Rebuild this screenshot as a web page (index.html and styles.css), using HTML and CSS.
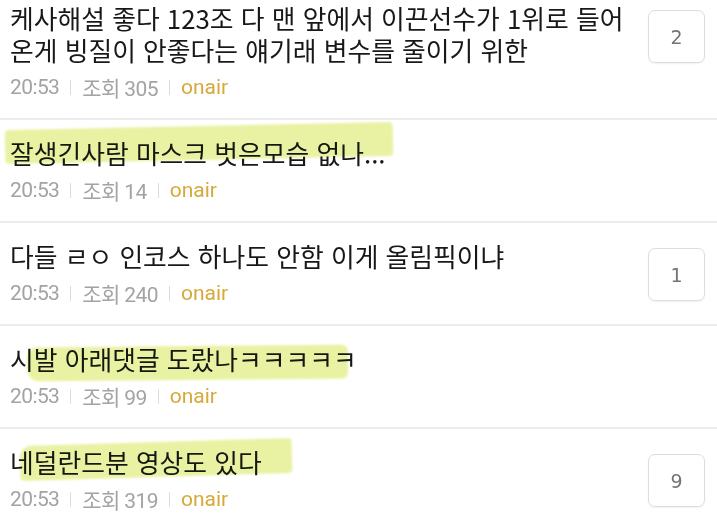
FILE: index.html
```html
<!DOCTYPE html>
<html lang="ko">
<head>
<meta charset="utf-8">
<link rel="stylesheet" href="styles.css">
</head>
<body>
<ul class="list">
  <li class="row">
    <div class="main">
      <div class="title">케사해설 좋다 123조 다 맨 앞에서 이끈선수가 1위로 들어 온게 빙질이 안좋다는 얘기래 변수를 줄이기 위한</div>
      <div class="meta"><span>20:53</span><i class="sep"></i><span>조회 305</span><i class="sep"></i><span class="nick">onair</span></div>
    </div>
    <div class="count">2</div>
  </li>
  <li class="row">
    <span class="mark mark-a"></span>
    <div class="main">
      <div class="title">잘생긴사람 마스크 벗은모습 없나...</div>
      <div class="meta"><span>20:53</span><i class="sep"></i><span>조회 14</span><i class="sep"></i><span class="nick">onair</span></div>
    </div>
  </li>
  <li class="row">
    <div class="main">
      <div class="title">다들 ㄹㅇ 인코스 하나도 안함 이게 올림픽이냐</div>
      <div class="meta"><span>20:53</span><i class="sep"></i><span>조회 240</span><i class="sep"></i><span class="nick">onair</span></div>
    </div>
    <div class="count">1</div>
  </li>
  <li class="row">
    <span class="mark mark-b"></span>
    <div class="main">
      <div class="title">시발 아래댓글 도랐나ㅋㅋㅋㅋㅋ</div>
      <div class="meta"><span>20:53</span><i class="sep"></i><span>조회 99</span><i class="sep"></i><span class="nick">onair</span></div>
    </div>
  </li>
  <li class="row">
    <span class="mark mark-c"></span>
    <div class="main">
      <div class="title">네덜란드분 영상도 있다</div>
      <div class="meta"><span>20:53</span><i class="sep"></i><span>조회 319</span><i class="sep"></i><span class="nick">onair</span></div>
    </div>
    <div class="count">9</div>
  </li>
</ul>
</body>
</html>
```

FILE: styles.css
```css
html, body {
  margin: 0;
  padding: 0;
  background: #ffffff;
}
body {
  font-family: "Noto Sans CJK KR", "Noto Sans", sans-serif;
  overflow: hidden;
}
.list {
  list-style: none;
  margin: -15px 0 0 0;
  padding: 0;
}
.row {
  position: relative;
  display: flex;
  align-items: flex-start;
  gap: 18px;
  padding: 17px 12px 17px 10px;
  border-bottom: 2px solid #ececec;
}
.main {
  flex: 1;
  min-width: 0;
  position: relative;
  z-index: 1;
}
.title {
  font-size: 25.8px;
  line-height: 32px;
  color: #181818;
  max-width: 625px;
  word-break: keep-all;
}
.meta {
  display: flex;
  align-items: center;
  margin-top: 7px;
  height: 28px;
  font-family: "Roboto", "Noto Sans CJK KR", sans-serif;
  font-size: 21px;
  letter-spacing: -0.6px;
  color: #a3a3a3;
}
.sep {
  display: inline-block;
  width: 1px;
  height: 15px;
  background: #dcdcdc;
  margin: 0 11px;
}
.nick {
  color: #d6aa3a;
  letter-spacing: 0;
}
.count {
  flex: none;
  width: 55px;
  height: 51px;
  margin-top: 8px;
  border: 1px solid #dddddd;
  border-radius: 7px;
  box-shadow: 0 1px 2px rgba(0,0,0,0.06);
  display: flex;
  align-items: center;
  justify-content: center;
  font-family: "DejaVu Sans", sans-serif;
  font-size: 19px;
  color: #747474;
  position: relative;
  z-index: 1;
}
.mark {
  position: absolute;
  z-index: 2;
  background: rgb(228, 239, 140);
  mix-blend-mode: multiply;
  opacity: 0.8;
  border-radius: 4px;
  filter: blur(0.8px);
  pointer-events: none;
}
.mark-a {
  left: 5px;
  top: 6px;
  width: 388px;
  height: 34px;
  transform: rotate(-1.2deg);
}
.mark-b {
  left: 27px;
  top: 20px;
  width: 321px;
  height: 34px;
  transform: rotate(-0.5deg);
  border-radius: 10px 6px 6px 12px;
}
.mark-c {
  left: 20px;
  top: 13px;
  width: 272px;
  height: 35px;
  transform: rotate(-1.7deg);
  border-radius: 12px 4px 4px 4px;
}
```
